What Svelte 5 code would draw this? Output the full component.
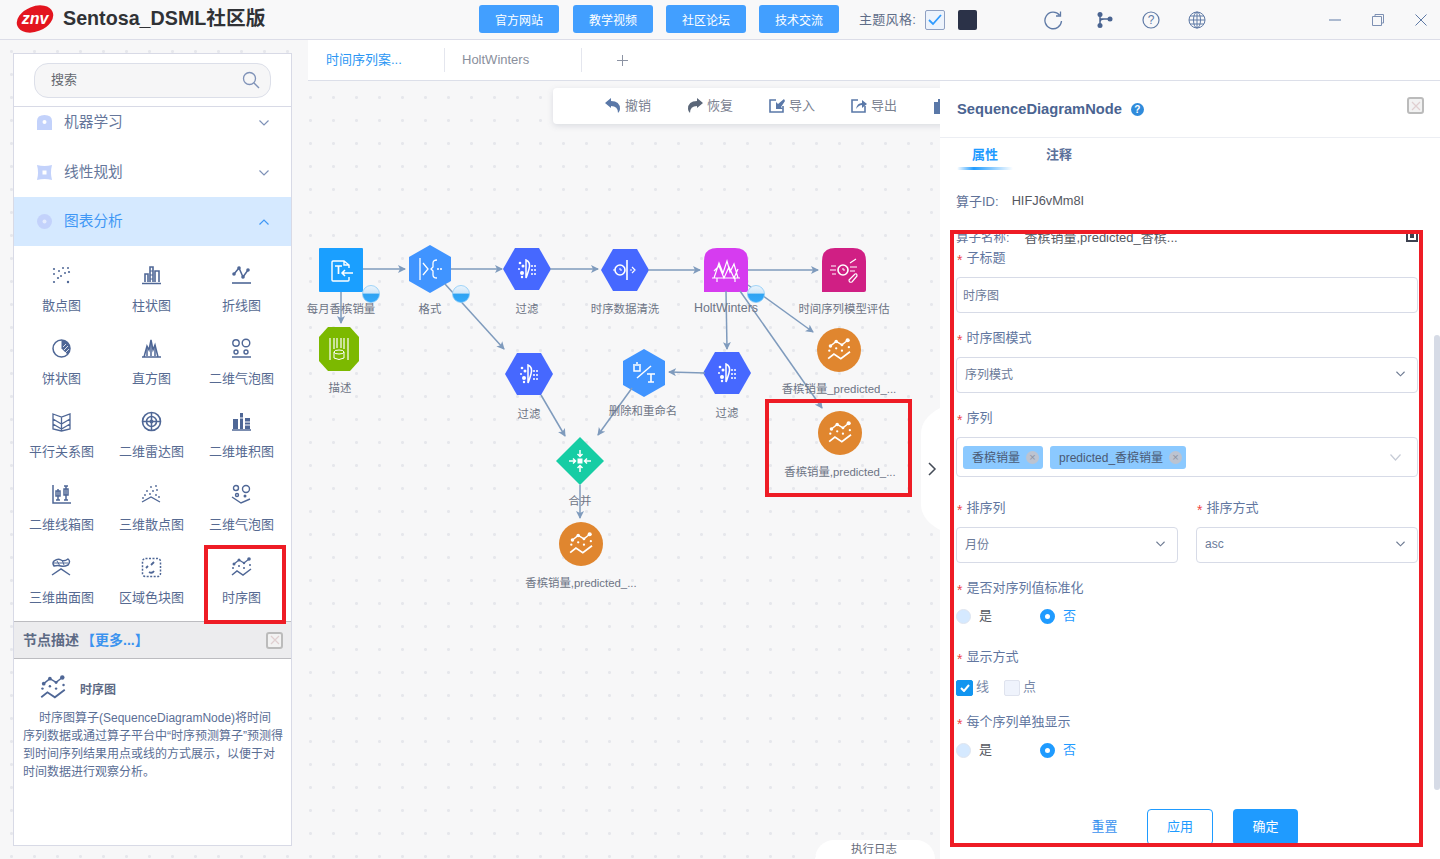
<script>
  const navButtons = ["官方网站", "教学视频", "社区论坛", "技术交流"];

  const chartIcons = {
    scatter: '<g fill="currentColor"><circle cx="3" cy="4" r="1.1"/><circle cx="8" cy="6" r="1"/><circle cx="12" cy="3" r="1"/><circle cx="17" cy="3" r="1"/><circle cx="3" cy="9" r="1"/><circle cx="14" cy="8" r="1"/><circle cx="18" cy="7" r="1.1"/><circle cx="7" cy="13" r="1.1"/><circle cx="3" cy="17" r="1.1"/><circle cx="10" cy="11" r="1"/><circle cx="17" cy="17" r="1.2"/></g>',
    bar: '<path d="M1 18.500h19M4 17v-8h3v8M9 17V2h3v15M14 17V6h4v11" fill="none" stroke="currentColor" stroke-width="1.600"/><path d="M9 6h3M9 10h3M9 14h3" stroke="currentColor"/>',
    line: '<path d="M1 18h19" stroke="currentColor" stroke-width="1.600"/><path d="M3 9l5-6 4 9 5-7" fill="none" stroke="currentColor" stroke-width="1.500"/><g fill="currentColor"><circle cx="3" cy="9" r="1.800"/><circle cx="8" cy="3" r="1.800"/><circle cx="12" cy="12" r="1.800"/><circle cx="17" cy="5" r="1.800"/></g>',
    pie: '<circle cx="10.500" cy="10.500" r="8.500" fill="none" stroke="currentColor" stroke-width="1.500"/><path d="M10.500 10.500V2a8.500 8.500 0 0 1 6 14.500z" fill="currentColor"/><path d="M12 9l3-3M13 12l4-4M14 15l4-4" stroke="#fff" stroke-width=".8"/>',
    hist: '<path d="M1 19h19M3 19l3-11 2 4 2-10 2 10 2-5 3 12" fill="none" stroke="currentColor" stroke-width="1.500"/><path d="M6 10v8M10 4v14M14 9v9" stroke="currentColor" stroke-width="1.500"/>',
    bubble: '<g fill="none" stroke="currentColor" stroke-width="1.400"><circle cx="5" cy="5" r="3.200"/><circle cx="15" cy="5" r="3.800"/><circle cx="5" cy="14" r="2"/><circle cx="15" cy="14" r="2"/></g><path d="M1 19h19" stroke="currentColor" stroke-width="1.500"/>',
    parallel: '<path d="M2 3l8.500 3 8.500-3v15l-8.500 2-8.500-2zM10.500 6v14M2 8l8.500 5 8.500-5M2 13l8.500 5 8.500-5" fill="none" stroke="currentColor" stroke-width="1.300"/>',
    radar: '<g fill="none" stroke="currentColor" stroke-width="1.600"><circle cx="10.500" cy="10.500" r="9"/><circle cx="10.500" cy="10.500" r="5"/></g><path d="M1 10.500h19M10.500 1v19" stroke="currentColor" stroke-width="1.500"/><circle cx="10.500" cy="10.500" r="2" fill="currentColor"/>',
    stack: '<path d="M1 19h19" stroke="currentColor" stroke-width="1.500"/><path d="M2 8h5v10H2zM9 2h3v16H9zM14 7h5v11h-5z" fill="currentColor"/><path d="M9 7h3M14 11h5M14 14h5" stroke="#fff"/>',
    box: '<path d="M2 1v18h18" fill="none" stroke="currentColor" stroke-width="1.500"/><path d="M7 5v11M15 2v14M5 7h4v5H5zM13 5h4v6h-4zM5 16h4M13 2h4M13 16h4" fill="none" stroke="currentColor" stroke-width="1.500"/>',
    scatter3: '<g fill="currentColor"><circle cx="10" cy="3" r=".9"/><circle cx="15" cy="2" r=".9"/><circle cx="6" cy="7" r=".9"/><circle cx="12" cy="7" r=".9"/><circle cx="16" cy="6" r=".9"/><circle cx="4" cy="11" r=".9"/><circle cx="9" cy="10" r=".9"/><circle cx="15" cy="11" r=".9"/><circle cx="2" cy="14" r=".9"/><circle cx="18" cy="13" r=".9"/></g><path d="M1 18l9-5 9 5" fill="none" stroke="currentColor" stroke-width="1.300"/>',
    bubble3: '<g fill="none" stroke="currentColor" stroke-width="1.400"><circle cx="5" cy="4" r="2.500"/><circle cx="15" cy="5" r="3.500"/><circle cx="6" cy="11" r="1.500"/></g><circle cx="14" cy="12" r="1.500" fill="currentColor"/><path d="M1 13l9 6 9-4" fill="none" stroke="currentColor" stroke-width="1.400"/>',
    surface: '<path d="M3 4q4-3 7-1t7-1q3 2 0 6-4 2-7 1t-7 0q-2-3 0-5z" fill="none" stroke="currentColor" stroke-width="1.500"/><path d="M6 4l3 5M11 3l2 5M3 6h14" stroke="currentColor"/><path d="M1 18l9-6 9 6" fill="none" stroke="currentColor" stroke-width="1.500"/>',
    heat: '<rect x="1.500" y="1.500" width="18" height="18" rx="3" fill="none" stroke="currentColor" stroke-width="1.500" stroke-dasharray="2 1.500"/><path d="M13 5l-3 3M7 9l-2 2M8 15q3 2 5-1" fill="none" stroke="currentColor" stroke-width="1.800"/>',
    series: '<g fill="currentColor"><circle cx="3" cy="7" r="1.500"/><circle cx="8" cy="3" r="1.500"/><circle cx="13" cy="6" r="1.200"/><circle cx="18" cy="2" r="1.800"/><circle cx="2" cy="11" r="1"/><circle cx="8" cy="9" r="1"/><circle cx="13" cy="11" r="1"/><circle cx="19" cy="8" r="1"/></g><path d="M3 7l5-4 5 3 5-4" fill="none" stroke="currentColor" stroke-width="1.200"/><path d="M1 18l5-4 6 4 8-6" fill="none" stroke="currentColor" stroke-width="1.500"/>'
  };

  const charts = [
    ["散点图", "scatter"], ["柱状图", "bar"], ["折线图", "line"],
    ["饼状图", "pie"], ["直方图", "hist"], ["二维气泡图", "bubble"],
    ["平行关系图", "parallel"], ["二维雷达图", "radar"], ["二维堆积图", "stack"],
    ["二维线箱图", "box"], ["三维散点图", "scatter3"], ["三维气泡图", "bubble3"],
    ["三维曲面图", "surface"], ["区域色块图", "heat"], ["时序图", "series"]
  ];

  // 画布上的连线，坐标与页面一致
  const edges = [
    [341, 292, 341, 323], [363, 269, 405, 269], [451, 269, 502, 269],
    [550, 269, 598, 269], [648, 270, 700, 270], [748, 270, 818, 270],
    [445, 284, 504, 349], [726, 291, 727, 349], [748, 285, 813, 332],
    [740, 291, 822, 408], [705, 373, 669, 372], [632, 388, 598, 435],
    [541, 395, 565, 436], [580, 485, 580, 518]
  ];

  const FILTER = '<g fill="#fff"><circle cx="-7" cy="-6" r="1.300"/><circle cx="-4" cy="-3" r="1.500"/><circle cx="-8" cy="0" r="1"/><circle cx="-5" cy="4" r="2"/><circle cx="-5" cy="8" r="1.200"/><circle cx="5" cy="-3" r="1"/><circle cx="8" cy="-3" r="1"/><circle cx="5" cy="1" r="1"/><circle cx="8" cy="1" r="1"/><circle cx="5" cy="5" r="1"/><circle cx="8" cy="5" r="1"/></g><path d="M-1-9q5 2 3 9t-3 9zM-1-9V9" fill="none" stroke="#fff" stroke-width="1.500"/>';
  const SERIES = '<g transform="translate(-12,-12) scale(1.150)">' + chartIcons.series.replaceAll("currentColor", "#fff") + '</g>';
  const HEX_H = "M-24 0L-12-21H12L24 0 12 21H-12Z";
  const HEX_V = "M0-24L21-12V12L0 24-21 12V-12Z";
  const TAB = "M-22 22V-9Q-22-22-9-22H9Q22-22 22-9V20Q22 22 20 22Z";

  const nodes = [
    { x: 341, y: 270, fill: "#1a9fff", shape: "M-22-21Q-22-22-21-22H21Q22-22 22-21V21Q22 22 21 22H-21Q-22 22-22 21Z",
      icon: '<path d="M8-2V-5L3-9H-8Q-9-9-9-8V10Q-9 11-8 11H7Q8 11 8 10V7M3-9V-5H8" fill="none" stroke="#fff" stroke-width="1.400"/><path d="M-6-4H1M-2.500-4V4" stroke="#fff" stroke-width="1.700"/><path d="M12 3H1M4 0L1 3 4 6" fill="none" stroke="#fff" stroke-width="1.500"/>' },
    { x: 430, y: 269, fill: "#4094ff", shape: HEX_V,
      icon: '<path d="M-10-11V11M-7-6L-2 0-7 6M7-9Q3-9 3-6V-2L1 0 3 2V6Q3 9 7 9" fill="none" stroke="#fff" stroke-width="1.300"/><circle cx="8" cy="0" r="1" fill="#fff"/><circle cx="11" cy="0" r="1" fill="#fff"/>' },
    { x: 527, y: 269, fill: "#4668ff", shape: HEX_H, icon: FILTER },
    { x: 625, y: 270, fill: "#4668ff", shape: HEX_H,
      icon: '<circle cx="-5" cy="0" r="5" fill="none" stroke="#fff" stroke-width="1.600"/><path d="M-5-2V0H-3" fill="none" stroke="#fff"/><path d="M2-10V10" stroke="#fff" stroke-width="1.600"/><path d="M-12 0H-10M5 0H7M7-3L10 0 7 3" fill="none" stroke="#fff" stroke-width="1.200"/>' },
    { x: 726, y: 270, fill: "#d63cf0", shape: TAB,
      icon: '<path d="M-12 8L-7-7-3 3 1-9 4 2 8-6 12 8M-12 1L-7-4-2 8 3-3 8 8 12-1M-14 8H14M-9 8V12M9 8V12" fill="none" stroke="#fff" stroke-width="1.200"/>' },
    { x: 844, y: 270, fill: "#d01f84", shape: TAB,
      icon: '<circle cx="-1" cy="0" r="5" fill="none" stroke="#fff" stroke-width="1.600"/><path d="M-1-2V0H1" fill="none" stroke="#fff"/><path d="M-13-4H-8M-14 0H-8M-12 4H-8M6-3H13M6 1H11M6-7L12-11" stroke="#fff" stroke-width="1.200"/><path d="M5 10L11 4Q13 3 13 6L8 12Q5 13 5 10Z" fill="none" stroke="#fff" stroke-width="1.200"/>' },
    { x: 339, y: 349, fill: "#7cb900", shape: "M-11-22H11L20-12V12L11 22H-11L-20 12V-12Z",
      icon: '<path d="M-9-11V11M9-11V11M-5-11V0M-2-11V-1M2-11V-1M5-11V0" stroke="#fff" stroke-width="1.200"/><ellipse cx="0" cy="3" rx="5" ry="2" fill="none" stroke="#fff"/><path d="M-5 3V9Q0 12 5 9V3" fill="none" stroke="#fff"/>' },
    { x: 529, y: 374, fill: "#4668ff", shape: HEX_H, icon: FILTER },
    { x: 644, y: 373, fill: "#4094ff", shape: HEX_V,
      icon: '<path d="M-7 5L7-7" stroke="#fff" stroke-width="1.500"/><path d="M-11-8H-3M-10-7V-2H-4V-7M-8-10H-6" fill="none" stroke="#fff" stroke-width="1.500"/><path d="M3 1H11M7 1V9M4 9H10" fill="none" stroke="#fff" stroke-width="1.600"/>' },
    { x: 727, y: 373, fill: "#4668ff", shape: HEX_H, icon: FILTER },
    { x: 839, y: 350, circle: true, fill: "#e0862f", icon: SERIES },
    { x: 840, y: 433, circle: true, fill: "#e0862f", icon: SERIES },
    { x: 580, y: 461, fill: "#16cda4", shape: "M0-24L24 0 0 24-24 0Z",
      icon: '<rect x="-2.500" y="-2.500" width="5" height="5" fill="#fff"/><path d="M0-11V-5M-2.500-7L0-4.500 2.500-7M0 11V5M-2.500 7L0 4.500 2.500 7M-11 0H-5M-7-2.500L-4.500 0-7 2.500M11 0H5M7-2.500L4.500 0 7 2.500" fill="none" stroke="#fff" stroke-width="1.500"/>' },
    { x: 581, y: 544, circle: true, fill: "#e0862f", icon: SERIES }
  ];

  const labels = [
    ["每月香槟销量", 341, 309], ["格式", 430, 309], ["过滤", 527, 309],
    ["时序数据清洗", 625, 309], ["HoltWinters", 726, 309], ["时间序列模型评估", 844, 309],
    ["描述", 340, 388], ["过滤", 529, 414], ["删除和重命名", 643, 411], ["过滤", 727, 413],
    ["香槟销量_predicted_...", 839, 389], ["香槟销量,predicted_...", 840, 472],
    ["合并", 580, 501], ["香槟销量,predicted_...", 581, 583]
  ];

  const bubbles = [[371, 294], [461, 294], [756, 294]];

  const toolbar = [
    ["撤销", '<path d="M0 6l6-5v3q9 0 9 8 0 2-2 4 0-7-7-7v2z" fill="#5a78a8"/>'],
    ["恢复", '<path d="M16 6l-6-5v3q-9 0-9 8 0 2 2 4 0-7 7-7v2z" fill="#5a6678"/>'],
    ["导入", '<path d="M7 3H1v12h13V9" fill="none" stroke="#5a78a8" stroke-width="1.600"/><path d="M15 2L9 7 7 5v7h7l-2-2 4-6z" fill="#5a78a8"/>'],
    ["导出", '<path d="M7 3H1v12h13V9" fill="none" stroke="#5a78a8" stroke-width="1.600"/><path d="M5 12q1-6 6-6V3l5 4-5 4V8q-3 0-6 4z" fill="#5a78a8"/>']
  ];
</script>

<div class="app">
  <header class="topbar">
    <svg class="logo" width="40" height="32" viewBox="0 0 40 32">
      <ellipse cx="20" cy="16" rx="19" ry="12.500" transform="rotate(-22 20 16)" fill="#e3151f" />
      <text x="20" y="21" text-anchor="middle" class="logo-text">znv</text>
    </svg>
    <div class="brand">Sentosa_DSML社区版</div>
    <nav class="nav">
      {#each navButtons as b}
        <button class="nav-btn">{b}</button>
      {/each}
    </nav>
    <span class="theme-label">主题风格:</span>
    <span class="theme-check">
      <svg width="16" height="14" viewBox="0 0 16 14"><path d="M2 7l4 4 8-9" fill="none" stroke="#2f9bff" stroke-width="1.800" /></svg>
    </span>
    <span class="theme-dark"></span>
    <div class="tools">
      <svg width="20" height="20" viewBox="0 0 20 20"><path d="M16.500 5A8.300 8.300 0 1 0 18.500 11M17.500 1.500V6H13" fill="none" stroke="#5f7aa6" stroke-width="1.300" /></svg>
      <svg width="18" height="18" viewBox="0 0 18 18"><g fill="#4a6491"><circle cx="4" cy="3.500" r="2.500" /><circle cx="4" cy="14.500" r="2.500" /><circle cx="14" cy="8" r="2.500" /></g><path d="M4 4v10M4 8h9M4 11q0-3 4-3" fill="none" stroke="#4a6491" stroke-width="1.500" /></svg>
      <svg width="18" height="18" viewBox="0 0 18 18"><circle cx="9" cy="9" r="8" fill="none" stroke="#5f7aa6" stroke-width="1.200" /><text x="9" y="13" text-anchor="middle" class="q">?</text></svg>
      <svg width="18" height="18" viewBox="0 0 18 18"><g fill="none" stroke="#5f7aa6"><circle cx="9" cy="9" r="8" /><ellipse cx="9" cy="9" rx="3.500" ry="8" /><path d="M1 9h16M2 5h14M2 13h14M9 1v16" /></g></svg>
    </div>
    <div class="win">
      <svg width="12" height="12" viewBox="0 0 12 12"><path d="M0 6h12" stroke="#5f7aa6" /></svg>
      <svg width="14" height="14" viewBox="0 0 14 14"><path d="M1.500 3.500h9v9h-9zM4 3.500V1.500h8.500v8.500h-2" fill="none" stroke="#7d90b3" /></svg>
      <svg width="12" height="12" viewBox="0 0 12 12"><path d="M.5.500l11 11M11.500.500l-11 11" stroke="#5f7aa6" /></svg>
    </div>
  </header>

  <div class="main">
    <aside class="sidebar">
      <div class="search-wrap">
        <div class="search">
          <span>搜索</span>
          <svg width="18" height="18" viewBox="0 0 18 18"><circle cx="7.500" cy="7.500" r="6" fill="none" stroke="#7f92b8" stroke-width="1.300" /><path d="M12 12l5 5" stroke="#7f92b8" stroke-width="1.500" /></svg>
        </div>
      </div>
      <div class="menu">
        <div class="menu-row first">
          <svg width="15" height="15" viewBox="0 0 15 15"><path d="M0 6Q0 0 7.500 0T15 6V15H0z" fill="#c3d2fb" /><circle cx="7.500" cy="7" r="2" fill="#fff" /></svg>
          <span class="menu-title">机器学习</span>
          <svg class="chev" width="10" height="6" viewBox="0 0 10 6"><path d="M.5.500L5 5 9.500.500" fill="none" stroke="#7f92b8" stroke-width="1.200" /></svg>
        </div>
        <div class="menu-row">
          <svg width="15" height="15" viewBox="0 0 15 15"><path d="M0 0q7.500 2 15 0-2 7.500 0 15-7.500-2-15 0 2-7.500 0-15z" fill="#c3d2fb" /><rect x="5.500" y="5.500" width="4" height="4" fill="#fff" /></svg>
          <span class="menu-title">线性规划</span>
          <svg class="chev" width="10" height="6" viewBox="0 0 10 6"><path d="M.5.500L5 5 9.500.500" fill="none" stroke="#7f92b8" stroke-width="1.200" /></svg>
        </div>
        <div class="menu-row active">
          <svg width="15" height="15" viewBox="0 0 15 15"><circle cx="7.500" cy="7.500" r="7.500" fill="#c3d2fb" /><circle cx="7.500" cy="7.500" r="2" fill="#e4ecfd" /></svg>
          <span class="menu-title">图表分析</span>
          <svg class="chev" width="10" height="6" viewBox="0 0 10 6"><path d="M.5 5.500L5 1l4.500 4.500" fill="none" stroke="#3f97f5" stroke-width="1.200" /></svg>
        </div>
      </div>
      <div class="chart-grid">
        {#each charts as [name, icon]}
          <div class="chart-cell">
            <svg class="chart-icon" width="21" height="21" viewBox="0 0 21 21">{@html chartIcons[icon]}</svg>
            <span>{name}</span>
          </div>
        {/each}
      </div>
      <div class="desc-head">
        <span class="desc-title">节点描述</span>
        <span class="desc-more">【更多...】</span>
        <span class="close-box"><svg width="10" height="10" viewBox="0 0 10 10"><path d="M1 1l8 8M9 1L1 9" stroke="#e0cfd0" stroke-width="1.200" /></svg></span>
      </div>
      <div class="desc-body">
        <div class="desc-name">
          <svg class="chart-icon" width="26" height="26" viewBox="0 0 21 21">{@html chartIcons.series}</svg>
          <b>时序图</b>
        </div>
        <p>时序图算子(SequenceDiagramNode)将时间<br />序列数据或通过算子平台中“时序预测算子”预测得<br />到时间序列结果用点或线的方式展示，以便于对<br />时间数据进行观察分析。</p>
      </div>
    </aside>

    <section class="work">
      <div class="tabs">
        <div class="tab current">时间序列案...</div>
        <div class="tab">HoltWinters</div>
        <svg class="plus" width="11" height="11" viewBox="0 0 11 11"><path d="M5.500 0v11M0 5.500h11" stroke="#8c93a3" /></svg>
      </div>

      <div class="canvas">
        <div class="toolbar">
          {#each toolbar as [name, body]}
            <span class="tool">
              <svg width="16" height="18" viewBox="0 0 16 18">{@html body}</svg>
              <span class="tool-name">{name}</span>
            </span>
          {/each}
          <span class="tool">
            <svg width="16" height="18" viewBox="0 0 16 18"><path d="M1 5h14v12H1zM5 5V2h6v3" fill="#5a78a8" /></svg>
          </span>
        </div>

        <svg class="flow" width="632" height="778" viewBox="308 81 632 778">
          <defs>
            <marker id="arrow" markerWidth="8" markerHeight="8" refX="7" refY="4" orient="auto" markerUnits="userSpaceOnUse">
              <path d="M0 0L8 4 0 8 2 4Z" fill="#7f9bbd" />
            </marker>
            <linearGradient id="water" x1="0" y1="0" x2="0" y2="1">
              <stop offset="0" stop-color="#eaf4fc" />
              <stop offset=".45" stop-color="#cfe6f8" />
              <stop offset=".5" stop-color="#2ea3f2" />
              <stop offset="1" stop-color="#35a9fb" />
            </linearGradient>
          </defs>
          {#each nodes as n}
            <g transform="translate({n.x},{n.y})">
              {#if n.circle}
                <circle r="22" fill={n.fill} />
              {:else}
                <path d={n.shape} fill={n.fill} />
              {/if}
              {@html n.icon}
            </g>
          {/each}
          {#each edges as [x1, y1, x2, y2]}
            <line {x1} {y1} {x2} {y2} stroke="#7f9bbd" stroke-width="1.500" marker-end="url(#arrow)" />
          {/each}
          {#each bubbles as [cx, cy]}
            <circle {cx} {cy} r="8.500" fill="url(#water)" stroke="#8ccbf8" stroke-width=".8" />
          {/each}
        </svg>

        {#each labels as [text, x, y]}
          <span class="node-label" class:wide={text === "HoltWinters"} style="left:{x - 308}px;top:{y - 82}px">{text}</span>
        {/each}

        <div class="log-tab">执行日志</div>
        <div class="handle">
          <svg width="20" height="122" viewBox="0 0 20 122">
            <path d="M20 0Q1 10 1 26V96Q1 112 20 122Z" fill="#fff" />
            <path d="M9 55l6 6-6 6" fill="none" stroke="#444b57" stroke-width="1.500" />
          </svg>
        </div>

        <div class="panel">
          <div class="panel-head">
            <span class="panel-title">SequenceDiagramNode</span>
            <span class="help">?</span>
            <span class="close-box"><svg width="10" height="10" viewBox="0 0 10 10"><path d="M1 1l8 8M9 1L1 9" stroke="#e0cfd0" stroke-width="1.200" /></svg></span>
          </div>
          <div class="panel-tabs">
            <span class="ptab on">属性</span>
            <span class="ptab">注释</span>
          </div>
          <div class="algo-id"><span>算子ID:</span><em>HIFJ6vMm8I</em></div>

          <div class="form">
            <div class="name-row">
              <span>算子名称:</span><em>香槟销量,predicted_香槟...</em>
              <svg width="14" height="14" viewBox="0 0 14 14"><path d="M1 2h10v10H1z" fill="none" stroke="#3d4250" stroke-width="2" /><path d="M4 5h4v4H4z" fill="#3d4250" /></svg>
            </div>

            <div class="label"><i>*</i>子标题</div>
            <div class="box">时序图</div>

            <div class="label gap"><i>*</i>时序图模式</div>
            <div class="box select">序列模式
              <svg width="9" height="6" viewBox="0 0 10 6"><path d="M.5.500L5 5 9.500.500" fill="none" stroke="#6d7a92" stroke-width="1.200" /></svg>
            </div>

            <div class="label gap"><i>*</i>序列</div>
            <div class="box multi">
              <span class="chip">香槟销量<u>×</u></span>
              <span class="chip">predicted_香槟销量<u>×</u></span>
              <svg width="11" height="7" viewBox="0 0 11 7"><path d="M.5.500L5.500 6 10.500.500" fill="none" stroke="#c6cbd6" stroke-width="1.200" /></svg>
            </div>

            <div class="two">
              <div>
                <div class="label"><i>*</i>排序列</div>
                <div class="box select">月份
                  <svg width="9" height="6" viewBox="0 0 10 6"><path d="M.5.500L5 5 9.500.500" fill="none" stroke="#6d7a92" stroke-width="1.200" /></svg>
                </div>
              </div>
              <div>
                <div class="label"><i>*</i>排序方式</div>
                <div class="box select">asc
                  <svg width="9" height="6" viewBox="0 0 10 6"><path d="M.5.500L5 5 9.500.500" fill="none" stroke="#6d7a92" stroke-width="1.200" /></svg>
                </div>
              </div>
            </div>

            <div class="label gap"><i>*</i>是否对序列值标准化</div>
            <div class="radios">
              <span class="radio"><b></b>是</span>
              <span class="radio on"><b></b>否</span>
            </div>

            <div class="label gap-lg"><i>*</i>显示方式</div>
            <div class="checks">
              <span class="check on"><b><svg width="10" height="8" viewBox="0 0 10 8"><path d="M1 4l3 3 5-6" fill="none" stroke="#fff" stroke-width="2" /></svg></b>线</span>
              <span class="check"><b></b>点</span>
            </div>

            <div class="label gap"><i>*</i>每个序列单独显示</div>
            <div class="radios">
              <span class="radio"><b></b>是</span>
              <span class="radio on"><b></b>否</span>
            </div>

            <div class="actions">
              <button class="btn-text">重置</button>
              <button class="btn-line">应用</button>
              <button class="btn-fill">确定</button>
            </div>
          </div>
          <div class="scrollbar"></div>
        </div>
      </div>
    </section>
  </div>

  <div class="mark mark-a"></div>
  <div class="mark mark-b"></div>
  <div class="mark mark-c"></div>
</div>

<style>
  :global(body) {
    margin: 0;
  }

  .app {
    position: relative;
    width: 1440px;
    height: 859px;
    overflow: hidden;
    display: flex;
    flex-direction: column;
    font-family: "Liberation Sans", "Noto Sans CJK SC", sans-serif;
    font-size: 13px;
    color: #5f7298;
    background-color: #f7f7f8;
    background-image: radial-gradient(circle, #e6e7ec 1.3px, transparent 1.6px);
    background-size: 23px 23px;
    background-position: 0px 40px;
  }

  .topbar {
    height: 39px;
    flex: none;
    display: flex;
    align-items: center;
    background: #f8f8f9;
    border-bottom: 1px solid #dcdde8;
  }

  .logo {
    margin-left: 15px;
    margin-top: -1px;
  }

  .logo-text {
    font: italic bold 16px "Liberation Sans", sans-serif;
    fill: #fff;
  }

  .brand {
    margin-left: 8px;
    width: 416px;
    padding-bottom: 6px;
    font-size: 19.700px;
    font-weight: 700;
    color: #303236;
    white-space: nowrap;
  }

  .nav {
    display: flex;
    gap: 13px;
    margin-top: -1px;
  }

  .nav-btn {
    width: 80px;
    height: 28px;
    padding: 0;
    border: 0;
    border-radius: 3px;
    background: #429fff;
    color: #fff;
    font: inherit;
    font-size: 12px;
  }

  .nav-btn:first-child {
    margin-right: 1px;
  }

  .theme-label {
    margin-left: 20px;
    width: 66px;
    padding-bottom: 3px;
    font-size: 13px;
    letter-spacing: 0.3px;
    color: #5f6d88;
  }

  .theme-check {
    width: 18px;
    height: 18px;
    display: flex;
    align-items: center;
    justify-content: center;
    border: 1px solid #8fa0c2;
    border-radius: 2px;
    background: #edf3fc;
  }

  .theme-dark {
    width: 19px;
    height: 20px;
    margin-left: 13px;
    border-radius: 2px;
    background: #2b3248;
  }

  .tools {
    margin-left: 66px;
    display: flex;
    align-items: center;
    gap: 28px;
  }

  .tools svg:first-child {
    margin-right: 5px;
  }

  .win {
    margin-left: 123px;
    display: flex;
    align-items: center;
    gap: 30px;
  }

  .q {
    font: 12px "Liberation Sans", sans-serif;
    fill: #5f7aa6;
  }

  .main {
    flex: 1;
    min-height: 0;
    display: flex;
  }

  .sidebar {
    width: 277px;
    height: 791px;
    flex: none;
    margin: 13px 16px 0 13px;
    display: flex;
    flex-direction: column;
    background: #fff;
    border: 1px solid #d8dae6;
  }

  .search-wrap {
    height: 52px;
    flex: none;
    display: flex;
    align-items: center;
    justify-content: center;
    border-bottom: 1px solid #d8dae6;
  }

  .search {
    width: 237px;
    height: 35px;
    box-sizing: border-box;
    padding: 0 11px 0 16px;
    display: flex;
    align-items: center;
    justify-content: space-between;
    border: 1px solid #dcdfe9;
    border-radius: 14px;
    background: #f6f6f7;
    color: #65686f;
  }

  .search span {
    padding-bottom: 3px;
  }

  .search svg {
    margin-right: -1px;
  }

  .menu {
    flex: none;
  }

  .menu-row {
    height: 49px;
    display: flex;
    align-items: center;
    padding: 0 22px 0 23px;
    font-size: 14.700px;
  }

  .menu-row.first {
    height: 41px;
    padding-bottom: 10px;
    box-sizing: border-box;
  }

  .menu-title {
    flex: 1;
    margin-left: 12px;
    padding-bottom: 4px;
    color: #66779b;
  }

  .menu-row.active {
    background: #d5e9ff;
  }

  .menu-row.active .menu-title {
    color: #3f97f5;
  }

  .chart-grid {
    flex: none;
    height: 375px;
    padding-left: 2.500px;
    display: grid;
    grid-template-columns: 90px 90px 90px;
    grid-auto-rows: 73px;
    align-content: start;
    justify-content: start;
  }

  .chart-cell {
    display: flex;
    flex-direction: column;
    align-items: center;
    padding-top: 19px;
    box-sizing: border-box;
    gap: 10.500px;
    color: #566a92;
    line-height: 18px;
  }

  .chart-icon {
    color: #4f6796;
  }

  .desc-head {
    height: 36px;
    flex: none;
    display: flex;
    align-items: center;
    padding: 0 8px 0 9px;
    background: #ececee;
    border-top: 1px solid #bcbcc0;
    border-bottom: 1px solid #bcbcc0;
    font-size: 14px;
  }

  .desc-title {
    padding-bottom: 2px;
    font-weight: 700;
    color: #5d6a84;
  }

  .desc-more {
    flex: 1;
    margin-left: 2px;
    padding-bottom: 2px;
    font-weight: 700;
    color: #3b93ef;
  }

  .close-box {
    width: 13px;
    height: 13px;
    display: flex;
    align-items: center;
    justify-content: center;
    border: 2px solid #bbbbbb;
    border-radius: 3px;
    background: #f2f2f2;
  }

  .desc-body {
    padding: 14px 0 0 9px;
    font-size: 12px;
  }

  .desc-name {
    display: flex;
    align-items: center;
    padding-left: 17px;
    gap: 14px;
    height: 30px;
  }

  .desc-name b {
    color: #5d6a84;
  }

  .desc-body p {
    margin: 6px 0 0;
    text-indent: 16px;
    line-height: 18px;
    white-space: nowrap;
    color: #5a6e95;
  }

  .work {
    flex: 1;
    min-width: 0;
    display: flex;
    flex-direction: column;
  }

  .tabs {
    height: 40px;
    flex: none;
    display: flex;
    align-items: center;
    background: #fff;
    border-bottom: 1px solid #dcdfe9;
    font-size: 13px;
    color: #8a8f9c;
  }

  .tab {
    width: 119px;
    padding-left: 17px;
    height: 24px;
    line-height: 24px;
    border-right: 1px solid #e4e6ee;
  }

  .tab.current {
    color: #2c97f4;
    width: 118px;
    padding-left: 18px;
  }

  .plus {
    margin-left: 35px;
  }

  .canvas {
    position: relative;
    flex: 1;
    min-height: 0;
  }

  .flow {
    position: absolute;
    left: 0;
    top: 0;
  }

  .toolbar {
    position: absolute;
    left: 245px;
    top: 7px;
    width: 420px;
    height: 36px;
    padding-left: 52px;
    box-sizing: border-box;
    display: flex;
    align-items: center;
    gap: 36px;
    background: #fff;
    border-radius: 4px;
    box-shadow: 0 2px 6px rgba(90, 100, 130, 0.18);
    color: #7b8291;
  }

  .tool {
    display: flex;
    align-items: center;
    gap: 4px;
  }

  .tool-name {
    padding-bottom: 4px;
  }

  .node-label {
    position: absolute;
    transform: translate(-50%, -50%);
    white-space: nowrap;
    font-size: 11.400px;
    color: #6d7485;
  }

  .node-label.wide {
    font-size: 12.400px;
  }

  .log-tab {
    position: absolute;
    left: 507px;
    bottom: 0;
    width: 120px;
    height: 19px;
    padding-right: 2px;
    box-sizing: border-box;
    line-height: 19px;
    text-align: center;
    font-size: 11.500px;
    color: #666c7a;
    background: #fff;
    border-radius: 20px 20px 0 0;
  }

  .handle {
    position: absolute;
    left: 612px;
    top: 327px;
    width: 20px;
    height: 122px;
  }

  .handle svg {
    display: block;
  }

  .panel {
    position: absolute;
    left: 632px;
    top: 0;
    width: 500px;
    height: 778px;
    overflow: hidden;
    background: #fff;
  }

  .panel-head {
    height: 57px;
    box-sizing: border-box;
    padding: 0 17px;
    display: flex;
    align-items: center;
    border-bottom: 1px solid #eceef3;
  }

  .panel-title {
    font-size: 14.700px;
    font-weight: 700;
    color: #4a6491;
  }

  .help {
    width: 13px;
    height: 13px;
    margin-left: 9px;
    flex: none;
    text-align: center;
    line-height: 13px;
    font-size: 10px;
    font-weight: 700;
    color: #fff;
    background: #2f8bdb;
    border-radius: 50%;
  }

  .panel-head .close-box {
    margin-left: auto;
    margin-right: -1px;
    margin-top: -7px;
  }

  .panel-tabs {
    height: 35px;
    display: flex;
    gap: 48px;
    padding-left: 32px;
    align-items: center;
    font-weight: 700;
    color: #5a7099;
  }

  .ptab {
    position: relative;
    margin-top: -4px;
  }

  .ptab.on {
    color: #1f9bff;
  }

  .ptab.on::after {
    content: "";
    position: absolute;
    left: -15px;
    right: -15px;
    bottom: -7px;
    height: 3px;
    border-radius: 2px;
    background: linear-gradient(90deg, rgba(31, 155, 255, 0), #1f9bff 30%, rgba(31, 155, 255, 0));
  }

  .algo-id {
    height: 58px;
    padding: 0 0 3px 16px;
    display: flex;
    align-items: center;
    gap: 13px;
    box-sizing: border-box;
    font-size: 13px;
  }

  .algo-id em {
    font-style: normal;
    font-size: 12.800px;
    color: #55585f;
  }

  .name-row em {
    font-style: normal;
    font-size: 13px;
    color: #55585f;
  }

  .form {
    height: 628px;
    overflow: hidden;
    padding: 0 22px 0 16px;
  }

  .name-row {
    height: 22px;
    margin-top: -6px;
    display: flex;
    align-items: center;
    gap: 15px;
    font-size: 12.500px;
  }

  .name-row svg {
    margin-left: auto;
    margin-right: -2px;
  }

  .label {
    height: 22px;
    line-height: 22px;
    color: #6176a0;
  }

  .label i {
    display: inline-block;
    width: 10.500px;
    padding-left: 1px;
    box-sizing: border-box;
    font-style: normal;
    color: #f04545;
    font-size: 14px;
    vertical-align: -3px;
  }

  .label.gap {
    margin-top: 14px;
  }

  .label.gap-lg {
    margin-top: 20px;
  }

  .box {
    height: 36px;
    margin-top: 8px;
    box-sizing: border-box;
    padding: 0 10px 2px 6px;
    display: flex;
    align-items: center;
    justify-content: space-between;
    border: 1px solid #d7dbe7;
    border-radius: 4px;
    font-size: 12px;
    color: #6b7a99;
  }

  .box.select {
    padding: 0 12px 3px 8px;
  }

  .multi {
    height: 40px;
    padding: 0 0 0 6px;
    justify-content: flex-start;
    gap: 7px;
  }

  .multi svg {
    margin-left: auto;
    margin-right: 16px;
  }

  .chip {
    height: 23px;
    box-sizing: border-box;
    padding: 0 4px 2px 9px;
    display: flex;
    align-items: center;
    background: #8bc9ff;
    border-radius: 3px;
    color: #4a5a74;
  }

  .chip u {
    width: 13px;
    height: 13px;
    margin: 2px 0 0 6px;
    text-align: center;
    line-height: 12px;
    text-decoration: none;
    font-size: 11px;
    color: #8c93a3;
    background: #bcc3d0;
    border-radius: 50%;
  }

  .two {
    margin-top: 20px;
    display: grid;
    grid-template-columns: 222px 222px;
    gap: 18px;
  }

  .radios {
    height: 20px;
    margin-top: 7px;
    display: flex;
    align-items: center;
  }

  .radio {
    width: 84px;
    display: flex;
    align-items: center;
    gap: 8px;
    line-height: 18px;
    color: #55585f;
  }

  .radio b {
    width: 15px;
    height: 15px;
    margin-top: 1px;
    box-sizing: border-box;
    border: 1px solid #dfe5ef;
    border-radius: 50%;
    background: #d5e9ff;
  }

  .radio.on {
    color: #1f9bff;
  }

  .radio.on b {
    border: 5px solid #1f9bff;
    background: #fff;
  }

  .checks {
    height: 20px;
    margin-top: 9px;
    display: flex;
    align-items: center;
    gap: 15px;
    line-height: 18px;
  }

  .check {
    display: flex;
    align-items: center;
    gap: 3px;
    color: #7788a8;
  }

  .check b {
    width: 16px;
    height: 16px;
    margin-top: 2px;
    box-sizing: border-box;
    display: flex;
    align-items: center;
    justify-content: center;
    border: 1px solid #dfe3ee;
    border-radius: 2px;
    background: #eff3fc;
  }

  .check.on b {
    width: 17px;
    border-color: #1295f0;
    background: #1295f0;
  }

  .actions {
    margin-top: 49px;
    display: flex;
    align-items: center;
    padding-left: 135px;
  }

  .actions button {
    height: 36px;
    padding: 0 0 3px;
    font: inherit;
    border-radius: 4px;
  }

  .btn-text {
    width: 27px;
    border: 0;
    background: none;
    color: #3b93ef;
  }

  .btn-line {
    width: 66px;
    margin-left: 29px;
    border: 1px solid #1f9bff;
    background: #fff;
    color: #1f9bff;
  }

  .btn-fill {
    width: 65px;
    margin-left: 20px;
    border: 0;
    background: #1f9bff;
    color: #fff;
  }

  .scrollbar {
    position: absolute;
    right: 0;
    top: 254px;
    width: 6px;
    height: 455px;
    border-radius: 3px;
    background: #d6dbe6;
  }

  .mark {
    position: absolute;
    box-sizing: border-box;
    border: 4px solid #ee1c25;
    pointer-events: none;
  }

  .mark-a {
    left: 204px;
    top: 545px;
    width: 82px;
    height: 79px;
  }

  .mark-b {
    left: 765px;
    top: 399px;
    width: 147px;
    height: 98px;
  }

  .mark-c {
    left: 950px;
    top: 230px;
    width: 473px;
    height: 617px;
  }
</style>
